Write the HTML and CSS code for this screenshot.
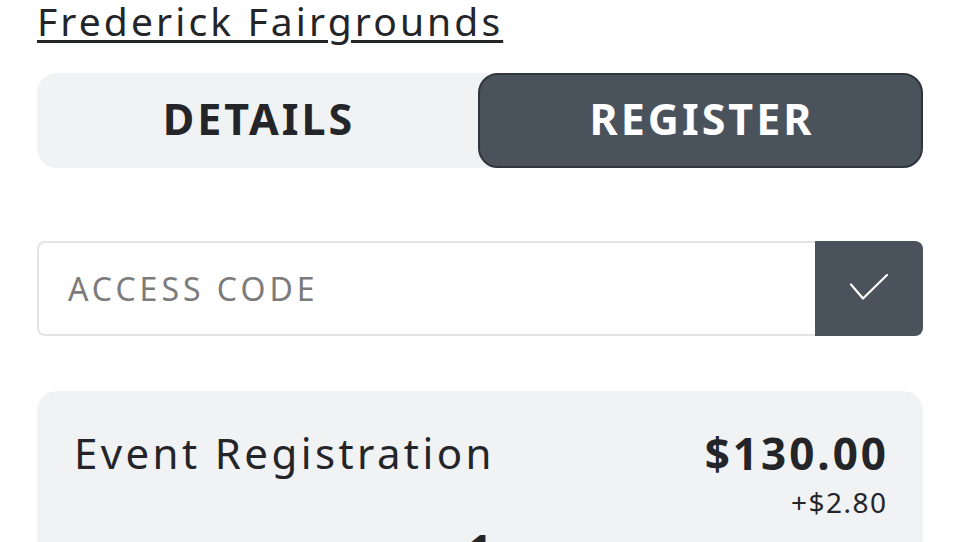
FILE: index.html
```html
<!DOCTYPE html>
<html>
<head>
<meta charset="utf-8">
<link rel="stylesheet" href="styles.css">
</head>
<body>
<main class="page">
  <a class="venue" href="#">Frederick Fairgrounds</a>
  <div class="tabs">
    <button class="tab">DETAILS</button>
    <button class="tab tab-active">REGISTER</button>
  </div>
  <form class="code-form">
    <input class="code-input" type="text" placeholder="ACCESS CODE">
    <button class="code-btn" type="button" aria-label="Apply">
      <svg width="40" height="30" viewBox="0 0 40 30"><path d="M2 10.5 L14 24.5 L38 1" fill="none" stroke="#fff" stroke-width="2.2" stroke-linecap="round" stroke-linejoin="round"/></svg>
    </button>
  </form>
  <section class="card">
    <div class="card-row">
      <div class="item-name">Event Registration</div>
      <div class="prices">
        <div class="price">$130.00</div>
        <div class="fee">+$2.80</div>
      </div>
    </div>
    <div class="qty">1</div>
  </section>
</main>
</body>
</html>
```
FILE: styles.css
```css
html, body { margin: 0; padding: 0; background: #fff; }
body { font-family: "Noto Sans", sans-serif; color: #232529; overflow: hidden; height: 542px; }
.page { padding: 0 37px; display: flex; flex-direction: column; }
.venue {
  align-self: flex-start;
  font-size: 39px;
  line-height: 46px;
  letter-spacing: 3.1px;
  margin-top: -2px;
  color: #232529;
  text-decoration: underline;
  text-decoration-thickness: 3px;
  text-underline-offset: 4px;
}
.tabs {
  margin-top: 29px;
  height: 95px;
  display: flex;
  background: #f1f2f4;
  border-radius: 20px;
}
.tab {
  flex: 1;
  border: 0;
  background: transparent;
  font-family: inherit;
  font-weight: 700;
  font-size: 43px;
  letter-spacing: 3px;
  padding: 0 0 4px 3px;
  color: #232529;
  border-radius: 20px;
}
.tab-active {
  background: #4a525b;
  color: #fff;
  border: 2px solid #30363d;
}
.code-form { margin-top: 73px; display: flex; height: 95px; }
.code-input {
  flex: 1;
  min-width: 0;
  box-sizing: border-box;
  height: 95px;
  border: 2px solid #e3e4e6;
  border-right: 0;
  border-radius: 8px 0 0 8px;
  padding: 0 0 0 29px;
  font-family: "Noto Sans", sans-serif;
  font-size: 32px;
  letter-spacing: 4px;
  outline: none;
}
.code-input::placeholder { color: #7b7b7b; }
.code-btn {
  width: 108px;
  border: 0;
  background: #4a525b;
  border-radius: 0 8px 8px 0;
  display: flex;
  align-items: center;
  justify-content: center;
  padding: 0;
}
.card {
  margin-top: 55px;
  background: #f1f2f4;
  border-radius: 20px;
  padding: 34px 37px 0;
  height: 300px;
}
.card-row { display: flex; justify-content: space-between; align-items: flex-start; }
.item-name { font-size: 42px; line-height: 56px; letter-spacing: 3.4px; }
.prices { text-align: right; }
.price { font-weight: 700; font-size: 44px; line-height: 56px; letter-spacing: 3px; margin-right: -3px; }
.fee { font-size: 28px; line-height: 30px; letter-spacing: 1.5px; margin-right: -1.5px; margin-top: 6px; }
.qty { text-align: center; font-size: 42px; font-weight: 700; margin-top: 3px; }
```
